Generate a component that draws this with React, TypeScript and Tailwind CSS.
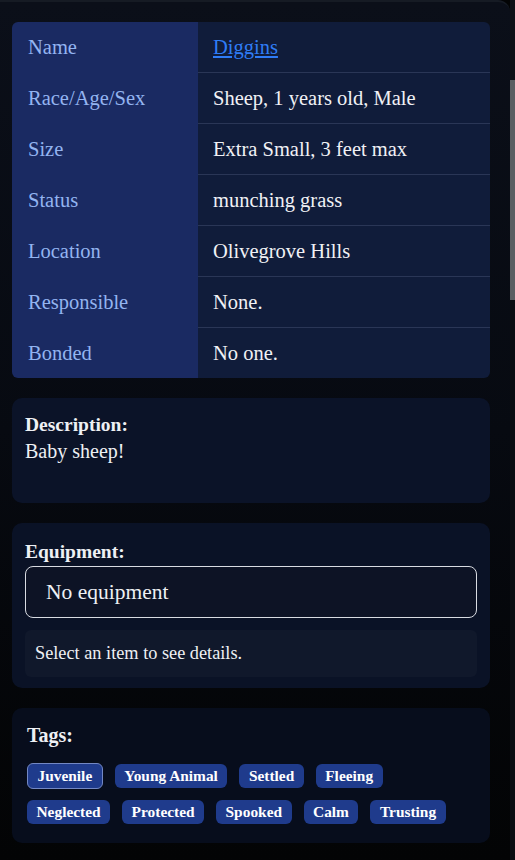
import React from "react";

const rows: { label: string; value: string; link?: boolean }[] = [
  { label: "Name", value: "Diggins", link: true },
  { label: "Race/Age/Sex", value: "Sheep, 1 years old, Male" },
  { label: "Size", value: "Extra Small, 3 feet max" },
  { label: "Status", value: "munching grass" },
  { label: "Location", value: "Olivegrove Hills" },
  { label: "Responsible", value: "None." },
  { label: "Bonded", value: "No one." },
];

const tags = [
  ["Juvenile", "Young Animal", "Settled", "Fleeing"],
  ["Neglected", "Protected", "Spooked", "Calm", "Trusting"],
];

export default function App() {
  return (
    <div
      className="w-[515px] h-[860px] flex overflow-hidden bg-[#030405] text-[#eef0f4]"
      style={{ fontFamily: '"Liberation Serif", "DejaVu Serif", serif' }}
    >
      <div className="w-[510px] shrink-0 rounded-tr-[12px] border-t-2 border-[#161b24] bg-gradient-to-b from-[#0b0f19] via-[#070a11] to-[#030405] px-3 pt-5 flex flex-col gap-5">
        <div className="rounded-[6px] overflow-hidden flex flex-col w-[478px]">
          {rows.map((r, i) => (
            <div key={r.label} className="flex">
              <div className="w-[186px] shrink-0 bg-[#1a2a62] pl-4 py-[10px] text-[20.5px] leading-[30px] text-[#93b4f0]">
                {r.label}
              </div>
              <div
                className={`flex-1 bg-[#101c3a] pl-[15px] py-[10px] text-[20.5px] leading-[30px] ${
                  i < rows.length - 1 ? "border-b border-[#2a3656]" : ""
                }`}
              >
                {r.link ? (
                  <span className="text-[#2f7cf6] underline">{r.value}</span>
                ) : (
                  <span className="text-[#f0f1f5]">{r.value}</span>
                )}
              </div>
            </div>
          ))}
        </div>

        <div className="w-[478px] h-[105px] rounded-[10px] bg-[#0b1328] px-[13px] pt-[14px]">
          <div className="text-[19.5px] leading-[26px] font-bold">Description:</div>
          <div className="text-[20px] leading-[26px]">Baby sheep!</div>
        </div>

        <div className="w-[478px] rounded-[10px] bg-[#0a1226] px-[13px] pt-[16px] pb-[11px] flex flex-col">
          <div className="text-[19.5px] leading-[26px] font-bold">Equipment:</div>
          <div className="mt-[1px] h-[52px] rounded-[8px] border border-[#d8dbe2] bg-[#0d1325] pl-5 flex items-center text-[21.5px]">
            No equipment
          </div>
          <div className="mt-3 h-[47px] rounded-[6px] bg-[#10182b] pl-[10px] flex items-center text-[18.3px]">
            Select an item to see details.
          </div>
        </div>

        <div className="w-[478px] h-[135px] rounded-[10px] bg-[#070d1c] px-[15px] pt-[14px]">
          <div className="text-[20px] leading-[26px] font-bold">Tags:</div>
          <div className="mt-[15px] flex flex-col gap-[10px]">
            {tags.map((row, ri) => (
              <div key={ri} className="flex items-center gap-[12px] h-[26px]">
                {row.map((t) => (
                  <span
                    key={t}
                    className={`px-[9.5px] rounded-[6px] bg-[#1f3b8c] text-[15.4px] font-bold text-white flex items-center ${
                      t === "Juvenile" ? "h-[26px] border border-[#7388c4]" : "h-[24px]"
                    }`}
                  >
                    {t}
                  </span>
                ))}
              </div>
            ))}
          </div>
        </div>
      </div>
      <div className="flex-1 flex flex-col bg-[#05070a]">
        <div className="h-[80px] bg-[#0e1218]" />
        <div className="h-[220px] bg-[#5a5e62]" />
        <div className="flex-1 bg-[#0a0d12]" />
      </div>
    </div>
  );
}
